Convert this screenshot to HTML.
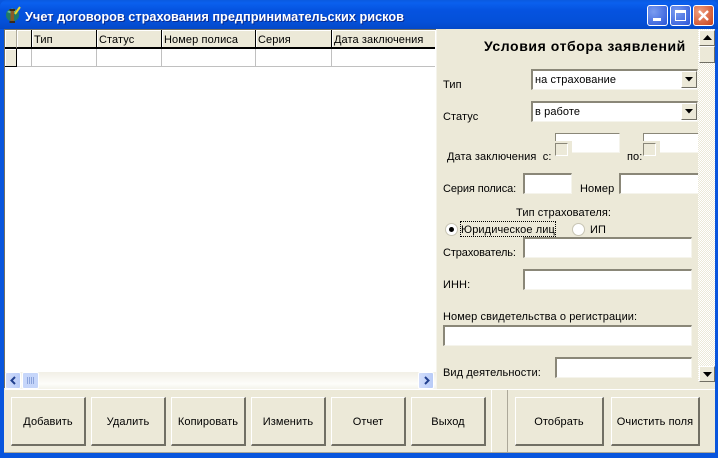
<!DOCTYPE html>
<html><head><meta charset="utf-8">
<style>
html,body{margin:0;padding:0}
body{width:718px;height:458px;overflow:hidden;position:relative;background:#0855dd;font:11px "Liberation Sans",sans-serif;letter-spacing:.1px;color:#000}
div,span{position:absolute;box-sizing:border-box}
.t{white-space:nowrap;line-height:14px;margin-top:1px}
.hd{background:#ece9d8;border-right:1px solid #000;border-bottom:2px solid #000;box-shadow:inset 1px 1px 0 #fff;height:19px;top:30px;padding:3px 0 0 2px;white-space:nowrap;line-height:14px}
.inp{background:#fff;border-top:2px solid #8a8778;border-left:2px solid #8a8778;border-right:1px solid #f5f4ec;border-bottom:1px solid #f5f4ec}
.btn{background:#ece9d8;border-top:1px solid #fff;border-left:1px solid #fff;border-right:2px solid #716f64;border-bottom:2px solid #716f64;text-align:center;line-height:48px;white-space:nowrap;top:397px;height:49px}
.sb{background:#ece9d8;border-top:1px solid #fff;border-left:1px solid #fff;border-right:1px solid #716f64;border-bottom:1px solid #716f64}
.cap{width:21px;height:21px;top:5px;border:1px solid #fff;border-radius:3px}
</style></head><body>
<div style="left:0;top:0;width:718px;height:29px;background:linear-gradient(#0a5ae0 0,#0a60ee 3px,#0553e0 10px,#0450d8 22px,#0348c8 29px);border-radius:7px 7px 0 0"></div>
<svg style="position:absolute;left:5px;top:6px" width="16" height="18" viewBox="0 0 16 18"><circle cx="7.5" cy="9" r="6.5" fill="#1f7a68"/><path d="M2 6l5-3.5 4 2-3 4z" fill="#5fb59c"/><rect x="5.5" y="4" width="3.5" height="12" fill="#8a5a28"/><rect x="4.5" y="3" width="5.5" height="2" fill="#3a2a18"/><rect x="4.5" y="15" width="5.5" height="2" fill="#3a2a18"/><path d="M10 8l5-7" stroke="#e8d830" stroke-width="2"/></svg>
<div class="t" style="left:25px;top:9px;color:#fff;font-weight:bold;font-size:12.75px;letter-spacing:0;text-shadow:1px 1px 0 #0a2a90">Учет договоров страхования предпринимательских рисков</div>
<div class="cap" style="left:647px;background:radial-gradient(circle at 30% 30%,#7a9cf0,#2a55d8)"><div style="left:5px;top:12px;width:8px;height:3px;background:#fff"></div></div>
<div class="cap" style="left:670px;background:radial-gradient(circle at 30% 30%,#7a9cf0,#2a55d8)"><div style="left:4px;top:4px;width:11px;height:11px;border:1px solid #fff;border-top-width:3px"></div></div>
<div class="cap" style="left:693px;background:radial-gradient(circle at 30% 30%,#f0a080,#c8401a)"><svg style="position:absolute;left:3px;top:3px" width="13" height="13"><path d="M2 2l9 9M11 2l-9 9" stroke="#fff" stroke-width="2.4"/></svg></div>

<div style="left:4px;top:29px;width:711px;height:424px;background:#ece9d8"></div>
<div style="left:4px;top:29px;width:432px;height:359px;background:#fff;border-left:1px solid #716f64;border-top:1px solid #716f64"></div>
<div class="hd" style="left:5px;width:12px;border-right:1px solid #aca899"></div>
<div class="hd" style="left:17px;width:15px"></div>
<div class="hd" style="left:32px;width:65px">Тип</div>
<div class="hd" style="left:97px;width:65px">Статус</div>
<div class="hd" style="left:162px;width:94px">Номер полиса</div>
<div class="hd" style="left:256px;width:76px">Серия</div>
<div class="hd" style="left:332px;width:103px;border-right:0">Дата заключения</div>
<div style="left:5px;top:49px;width:12px;height:18px;background:#ece9d8;border-right:1px solid #000;border-bottom:1px solid #000;box-shadow:inset 1px 1px 0 #fff"></div>
<div style="left:17px;top:66px;width:418px;height:1px;background:#c0c0c0"></div>
<div style="left:31px;top:49px;width:1px;height:18px;background:#c0c0c0"></div>
<div style="left:96px;top:49px;width:1px;height:18px;background:#c0c0c0"></div>
<div style="left:161px;top:49px;width:1px;height:18px;background:#c0c0c0"></div>
<div style="left:255px;top:49px;width:1px;height:18px;background:#c0c0c0"></div>
<div style="left:331px;top:49px;width:1px;height:18px;background:#c0c0c0"></div>

<div style="left:5px;top:372px;width:431px;height:17px;background:linear-gradient(#f1efe6,#fdfdfa 70%,#f4f3ea)"></div>
<div style="left:5px;top:372px;width:16px;height:17px;background:linear-gradient(90deg,#d3defb,#b8cbf8);border:1px solid #fff;border-radius:2px"><svg style="position:absolute;left:3px;top:3px" width="9" height="9"><path d="M6 1L2.5 4.5 6 8" stroke="#22408f" stroke-width="2" fill="none"/></svg></div>
<div style="left:22px;top:372px;width:17px;height:17px;background:#c6d6fa;border:1px solid #fff;border-radius:2px"><svg style="position:absolute;left:3px;top:3px" width="9" height="9"><path d="M1.5 1v7M3.5 1v7M5.5 1v7M7.5 1v7" stroke="#8ca4dc"/></svg></div>
<div style="left:418px;top:372px;width:16px;height:17px;background:linear-gradient(90deg,#d3defb,#b8cbf8);border:1px solid #fff;border-radius:2px"><svg style="position:absolute;left:3px;top:3px" width="9" height="9"><path d="M3 1L6.5 4.5 3 8" stroke="#22408f" stroke-width="2" fill="none"/></svg></div>

<div style="left:698px;top:29px;width:17px;height:353px;background:#f5f4ec;background-image:repeating-conic-gradient(#fff 0 25%,#ece9d8 0 50%);background-size:2px 2px"></div>
<div class="sb" style="left:699px;top:30px;width:16px;height:16px"><svg style="position:absolute;left:3px;top:4px" width="9" height="6"><path d="M4.5 0L9 5H0z" fill="#000"/></svg></div>
<div class="sb" style="left:699px;top:46px;width:16px;height:17px"></div>
<div class="sb" style="left:699px;top:366px;width:16px;height:16px"><svg style="position:absolute;left:3px;top:5px" width="9" height="6"><path d="M0 0h9L4.5 5z" fill="#000"/></svg></div>

<div class="t" style="left:484px;top:38px;font-weight:bold;font-size:14px;letter-spacing:.58px">Условия отбора заявлений</div>

<div class="t" style="left:443px;top:77px">Тип</div>
<div class="inp" style="left:531px;top:69px;width:167px;height:21px"></div>
<div class="t" style="left:535px;top:72px">на страхование</div>
<div class="sb" style="left:681px;top:71px;width:16px;height:17px"><svg style="position:absolute;left:3px;top:5px" width="9" height="6"><path d="M0 0h8L4 4.5z" fill="#000"/></svg></div>
<div class="t" style="left:443px;top:109px">Статус</div>
<div class="inp" style="left:531px;top:101px;width:167px;height:21px"></div>
<div class="t" style="left:535px;top:104px">в работе</div>
<div class="sb" style="left:681px;top:103px;width:16px;height:17px"><svg style="position:absolute;left:3px;top:5px" width="9" height="6"><path d="M0 0h8L4 4.5z" fill="#000"/></svg></div>

<div class="t" style="left:447px;top:149px">Дата заключения&nbsp; с:</div>
<div class="inp" style="left:555px;top:133px;width:65px;height:20px;border-width:1px 1px 1px 1px;border-color:#8a8778 #f5f4ec #f5f4ec #8a8778"></div>
<div style="left:555px;top:141px;width:17px;height:17px;background:#ece9d8"></div>
<div style="left:555px;top:143px;width:13px;height:13px;background:#ece9d8;border:1px solid;border-color:#8a8778 #fff #fff #8a8778"></div>
<div class="t" style="left:627px;top:149px">по:</div>
<div class="inp" style="left:643px;top:133px;width:55px;height:20px;border-width:1px 0 1px 1px;border-color:#8a8778 #f5f4ec #f5f4ec #8a8778"></div>
<div style="left:643px;top:141px;width:17px;height:17px;background:#ece9d8"></div>
<div style="left:643px;top:143px;width:13px;height:13px;background:#ece9d8;border:1px solid;border-color:#8a8778 #fff #fff #8a8778"></div>

<div class="t" style="left:443px;top:181px;letter-spacing:-.1px">Серия полиса:</div>
<div class="inp" style="left:523px;top:173px;width:49px;height:21px"></div>
<div class="t" style="left:580px;top:181px">Номер</div>
<div class="inp" style="left:619px;top:173px;width:79px;height:21px;border-right:0"></div>

<div class="t" style="left:516px;top:205px">Тип страхователя:</div>
<div style="left:445px;top:223px;width:13px;height:13px;border-radius:50%;background:#fff;border:1px solid #c8c5b4"><div style="left:3px;top:3px;width:5px;height:5px;border-radius:50%;background:#000"></div></div>
<div style="left:460px;top:221px;width:96px;height:16px;border:1px dotted #000"></div>
<div class="t" style="left:461px;top:222px;width:94px;overflow:hidden">Юридическое лицо</div>
<div style="left:572px;top:223px;width:13px;height:13px;border-radius:50%;background:#fff;border:1px solid #c8c5b4"></div>
<div class="t" style="left:590px;top:222px">ИП</div>

<div class="t" style="left:443px;top:245px;letter-spacing:-.1px">Страхователь:</div>
<div class="inp" style="left:523px;top:237px;width:169px;height:21px"></div>
<div class="t" style="left:443px;top:277px">ИНН:</div>
<div class="inp" style="left:523px;top:269px;width:169px;height:21px"></div>
<div class="t" style="left:443px;top:309px">Номер свидетельства о регистрации:</div>
<div class="inp" style="left:443px;top:325px;width:249px;height:21px"></div>
<div class="t" style="left:443px;top:365px">Вид деятельности:</div>
<div class="inp" style="left:555px;top:357px;width:137px;height:21px"></div>

<div style="left:5px;top:389px;width:710px;height:1px;background:#fff"></div>
<div style="left:436px;top:29px;width:1px;height:360px;background:#f5f4ec"></div>
<div style="left:491px;top:390px;width:1px;height:63px;background:#fff"></div>
<div style="left:507px;top:390px;width:1px;height:63px;background:#aca899"></div>

<div class="btn" style="left:11px;width:75px">Добавить</div>
<div class="btn" style="left:91px;width:75px">Удалить</div>
<div class="btn" style="left:171px;width:75px">Копировать</div>
<div class="btn" style="left:251px;width:75px">Изменить</div>
<div class="btn" style="left:331px;width:75px">Отчет</div>
<div class="btn" style="left:411px;width:75px">Выход</div>
<div class="btn" style="left:515px;width:89px">Отобрать</div>
<div class="btn" style="left:611px;width:89px">Очистить поля</div>
<div style="left:4px;top:452px;width:711px;height:1px;background:#aca899"></div>
</body></html>
